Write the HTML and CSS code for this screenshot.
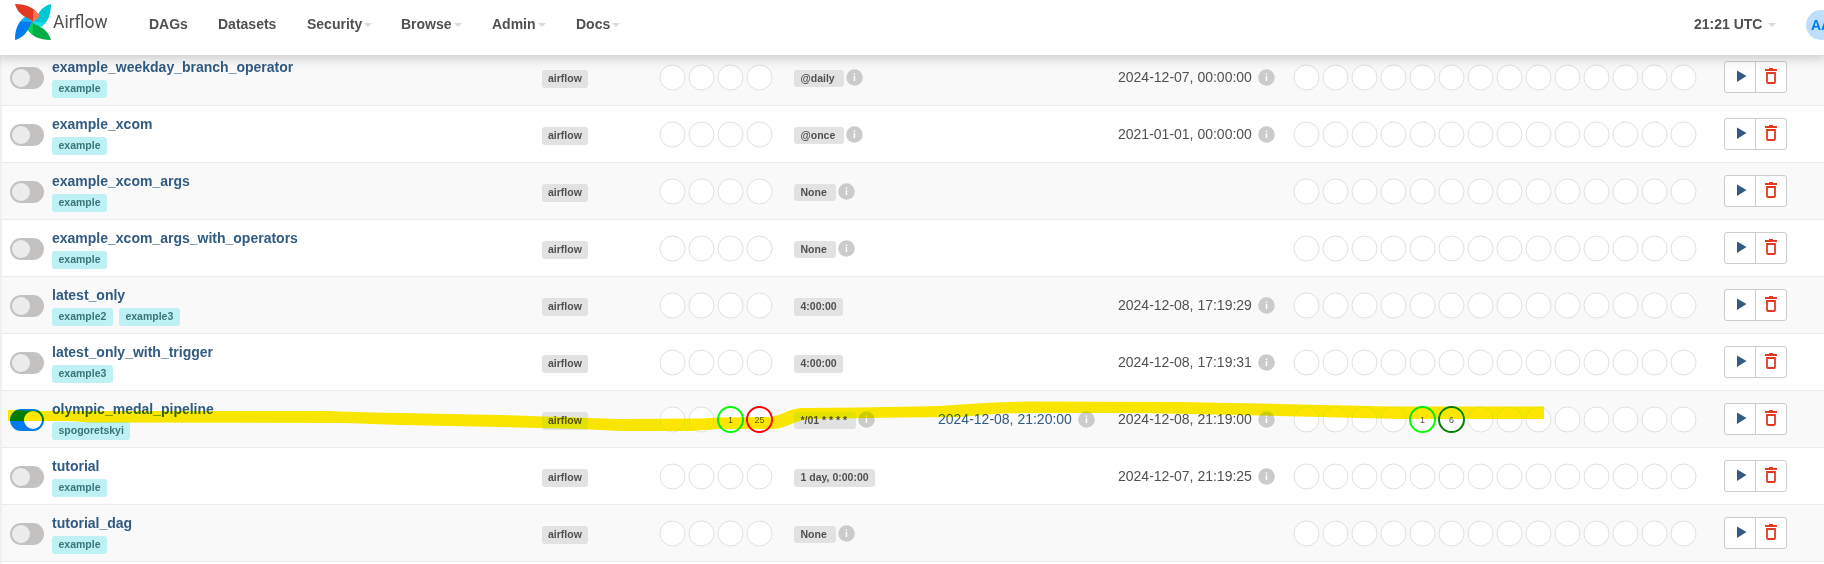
FILE: index.html
```
<!DOCTYPE html>
<html lang="en">
<head>
<meta charset="utf-8">
<title>Airflow - DAGs</title>
<link rel="stylesheet" href="styles.css">
</head>
<body>
<header class="navbar">
  <a class="brand">
    <svg class="pinwheel" width="36" height="36" viewBox="0 0 36 36">
      <path fill="#00c7d4" d="M18 18C23 15 22 4 36 0C36 12 32 20 25 23Z"/>
      <path fill="#11e1ee" d="M18 18L30 18.500C28 22 26 23 24 23.500Z"/>
      <path fill="#00ad46" d="M18 18C21 23 32 22 36 36C24 36 16 32 13 25Z"/>
      <path fill="#04d659" d="M18 18L17.500 30C14 28 12 26 11.500 23.500Z"/>
      <path fill="#017cee" d="M18 18C13 21 14 32 0 36C0 24 4 16 11 13Z"/>
      <path fill="#0cb6ff" d="M18 18L6 17.500C8 14 10 12 12.500 11.500Z"/>
      <path fill="#e43921" d="M18 18C15 13 4 14 0 0C12 0 20 4 23 11Z"/>
      <path fill="#ff7557" d="M18 18L18.500 6C22 8 24 10 24.500 12.500Z"/>
    </svg>
    <span class="wordmark">Airflow</span>
  </a>
  <nav class="menu">
    <a class="m-dags">DAGs</a>
    <a class="m-datasets">Datasets</a>
    <a class="m-security">Security<i class="caret"></i></a>
    <a class="m-browse">Browse<i class="caret"></i></a>
    <a class="m-admin">Admin<i class="caret"></i></a>
    <a class="m-docs">Docs<i class="caret"></i></a>
  </nav>
  <div class="clock">21:21 UTC<i class="caret"></i></div>
  <div class="avatar">AA</div>
</header>
<main class="dags" id="dags"></main>
<svg class="marker" width="1824" height="564" viewBox="0 0 1824 564">
  <path d="M8 410L45 411L330 411Q345 412 400 413L500 415L620 419L700 418.500L720 417.500L770 417C782 416 788 408 805 408L860 407.500L940 406Q990 402 1030 401.500L1180 402L1280 404L1390 406.500L1544 406.500L1544 419L1400 419L1280 416L1140 413L1040 413L1000 413.500L960 417L900 417.500L810 419C795 420 788 428 773 429L720 429L690 431L620 431L580 429L500 427L400 425L345 423L90 422.500L70 421L8 421Z"/>
</svg>
<script src="dags.js"></script>
</body>
</html>
```

FILE: styles.css
```
* { box-sizing: border-box; }
body {
  margin: 0;
  height: 564px;
  overflow: hidden;
  position: relative;
  background: #fff;
  color: #51504f;
  font: 14px/20px "Liberation Sans", Arial, sans-serif;
}
.navbar {
  position: relative;
  z-index: 2;
  display: flex;
  height: 55px;
  background: #fff;
  box-shadow: 0 0 12px 3px rgba(0, 0, 0, .2);
  font-weight: bold;
  white-space: nowrap;
}
.brand { display: flex; width: 149px; padding: 4px 0 0 15px; }
.pinwheel { flex: none; }
.wordmark {
  margin: 8px 0 0 2px;
  font: 17.5px/20px Roboto, sans-serif;
  font-weight: 400;
}
.menu { display: flex; flex: 1; padding-top: 14px; }
.m-dags { width: 69px; }
.m-datasets { width: 89px; }
.m-security { width: 94px; }
.m-browse { width: 91px; }
.m-admin { width: 84px; }
.caret {
  display: inline-block;
  margin-left: 2px;
  vertical-align: 2px;
  border: 4px solid transparent;
  border-top-color: #e2d2e2;
  border-bottom: 0;
}
.clock { width: 112px; padding-top: 14px; }
.clock .caret { margin-left: 6px; }
.avatar {
  width: 30px;
  height: 30px;
  margin: 10px -12px 0 0;
  border-radius: 50%;
  background: #bfdefc;
  color: #017cee;
  text-align: center;
  line-height: 30px;
}
.dags { margin-top: -7px; border-left: 2px solid #f0f0f0; }
.row {
  display: grid;
  grid-template-columns: 50px 490px 117px 135px 144px 180px 175px 431px 63px;
  height: 57px;
  border-top: 1px solid #ebebeb;
}
.row:nth-child(odd) { background: #f9f9f9; }
.switch {
  width: 34px;
  height: 22px;
  margin: 18px 0 0 8px;
  padding: 2px;
  border-radius: 11px;
  background: #c4c2c1;
}
.switch::before {
  content: "";
  display: block;
  width: 18px;
  height: 18px;
  border-radius: 50%;
  background: #edecec;
}
.switch.on { background: #017cee; }
.switch.on::before { margin-left: 12px; background: #fff; }
.dag { padding-top: 8px; }
.name { display: block; height: 20px; color: #315b81; font-weight: bold; }
.tags { display: flex; gap: 6px; padding-top: 3px; }
.tag, .label {
  display: block;
  height: 18px;
  padding: 0 6.500px;
  border-radius: 3px;
  background: #bdf1f4;
  color: #38767c;
  font-size: 10.5px;
  font-weight: bold;
  line-height: 17px;
  white-space: nowrap;
}
.label { background: #e2e2e2; color: #51504f; padding: 0 6px; }
.owner { padding-top: 21px; }
.owner .label { width: 46px; }
.schedule { display: flex; gap: 2px; padding-top: 21px; }
.schedule .label { padding-left: 6.5px; }
.schedule .label.wide { height: 17px; }
.info { flex: none; display: block; }
.schedule .info { margin-top: -1px; }
.date { display: flex; gap: 6px; padding-top: 18px; white-space: nowrap; }
.date span { width: 134px; }
.date .info { margin-top: 2px; }
.next { color: #315b81; }
.runs { display: flex; gap: 2px; padding-top: 15px; }
.run {
  flex: none;
  width: 27px;
  height: 27px;
  fill: #fff;
  stroke: #e0e0e0;
}
.run text {
  fill: #51504f;
  stroke: none;
  font-size: 9px;
  text-anchor: middle;
}
.run.running, .run.failed, .run.success { stroke-width: 2px; }
.run.running { stroke: #0f0; }
.run.failed { stroke: #f00; }
.run.success { stroke: #008000; }
.actions {
  display: flex;
  width: 63px;
  height: 32px;
  margin-top: 12px;
  border: 1px solid #ccc;
  border-radius: 3px;
  background: #fff;
}
.actions span { flex: 1; }
.actions span + span { border-left: 1px solid #ccc; }
.actions svg { display: block; width: 30px; height: 30px; }
.marker {
  position: absolute;
  z-index: 3;
  left: 0;
  top: 0;
  fill: #ffe600;
  mix-blend-mode: darken;
}
```

FILE: dags.js
```
const dags = [
  { name: "example_weekday_branch_operator", tags: ["example"], schedule: "@daily", w: 50, info: true, last: "2024-12-07, 00:00:00" },
  { name: "example_xcom", tags: ["example"], schedule: "@once", w: 50, info: true, last: "2021-01-01, 00:00:00" },
  { name: "example_xcom_args", tags: ["example"], schedule: "None", w: 42, info: true },
  { name: "example_xcom_args_with_operators", tags: ["example"], schedule: "None", w: 42, info: true },
  { name: "latest_only", tags: ["example2", "example3"], schedule: "4:00:00", w: 49, last: "2024-12-08, 17:19:29" },
  { name: "latest_only_with_trigger", tags: ["example3"], schedule: "4:00:00", w: 49, last: "2024-12-08, 17:19:31" },
  { name: "olympic_medal_pipeline", tags: ["spogoretskyi"], on: true, schedule: "*/01 * * * *", w: 62, info: true,
    next: "2024-12-08, 21:20:00", last: "2024-12-08, 21:19:00",
    runs: { 2: ["running", 1], 3: ["failed", 25] }, tasks: { 4: ["running", 1], 5: ["success", 6] } },
  { name: "tutorial", tags: ["example"], schedule: "1 day, 0:00:00", w: 81, last: "2024-12-07, 21:19:25" },
  { name: "tutorial_dag", tags: ["example"], schedule: "None", w: 42, info: true }
];

const info = `<svg class="info" width="17" height="17" viewBox="0 0 17 17"><circle cx="8.500" cy="8.500" r="8.300" fill="#cbcbcb"/><path fill="#fff" d="M7.700 4.500h1.500v1.500h-1.500zM7.700 7h1.500v5h-1.500z"/></svg>`;
const play = `<svg viewBox="0 0 30 30"><path fill="#315b81" d="M12 8.500L21.500 14L12 20Z"/></svg>`;
const trash = `<svg viewBox="0 0 30 30"><path fill="#e43921" d="M9 7h4v-1h4v1h4v2h-12z"/><path fill="none" stroke="#e43921" stroke-width="1.800" d="M11 11h8v9q0 1-1 1h-6q-1 0-1-1z"/></svg>`;

const circles = (count, states = {}) => Array.from({ length: count }, (_, i) => {
  const [state, n] = states[i] || ["", ""];
  return `<svg class="run ${state}" viewBox="0 0 27 27"><circle cx="13.500" cy="13.500" r="12.500"/>${n ? `<text x="13.500" y="17">${n}</text>` : ""}</svg>`;
}).join("");
const date = (text, cls = "") => `<div class="date ${cls}">${text ? `<span>${text}</span>${info}` : ""}</div>`;

document.getElementById("dags").innerHTML = dags.map(d => `
  <div class="row">
    <div class="switch ${d.on ? "on" : ""}"></div>
    <div class="dag"><a class="name">${d.name}</a><div class="tags">${d.tags.map(t => `<span class="tag">${t}</span>`).join("")}</div></div>
    <div class="owner"><span class="label">airflow</span></div>
    <div class="runs">${circles(4, d.runs)}</div>
    <div class="schedule"><span class="label ${d.info ? "wide" : ""}" style="width:${d.w}px">${d.schedule}</span>${d.info ? info : ""}</div>
    ${date(d.next, "next")}
    ${date(d.last)}
    <div class="runs">${circles(14, d.tasks)}</div>
    <div class="actions"><span>${play}</span><span>${trash}</span></div>
  </div>`).join("") + `<div class="row"></div>`;
```
